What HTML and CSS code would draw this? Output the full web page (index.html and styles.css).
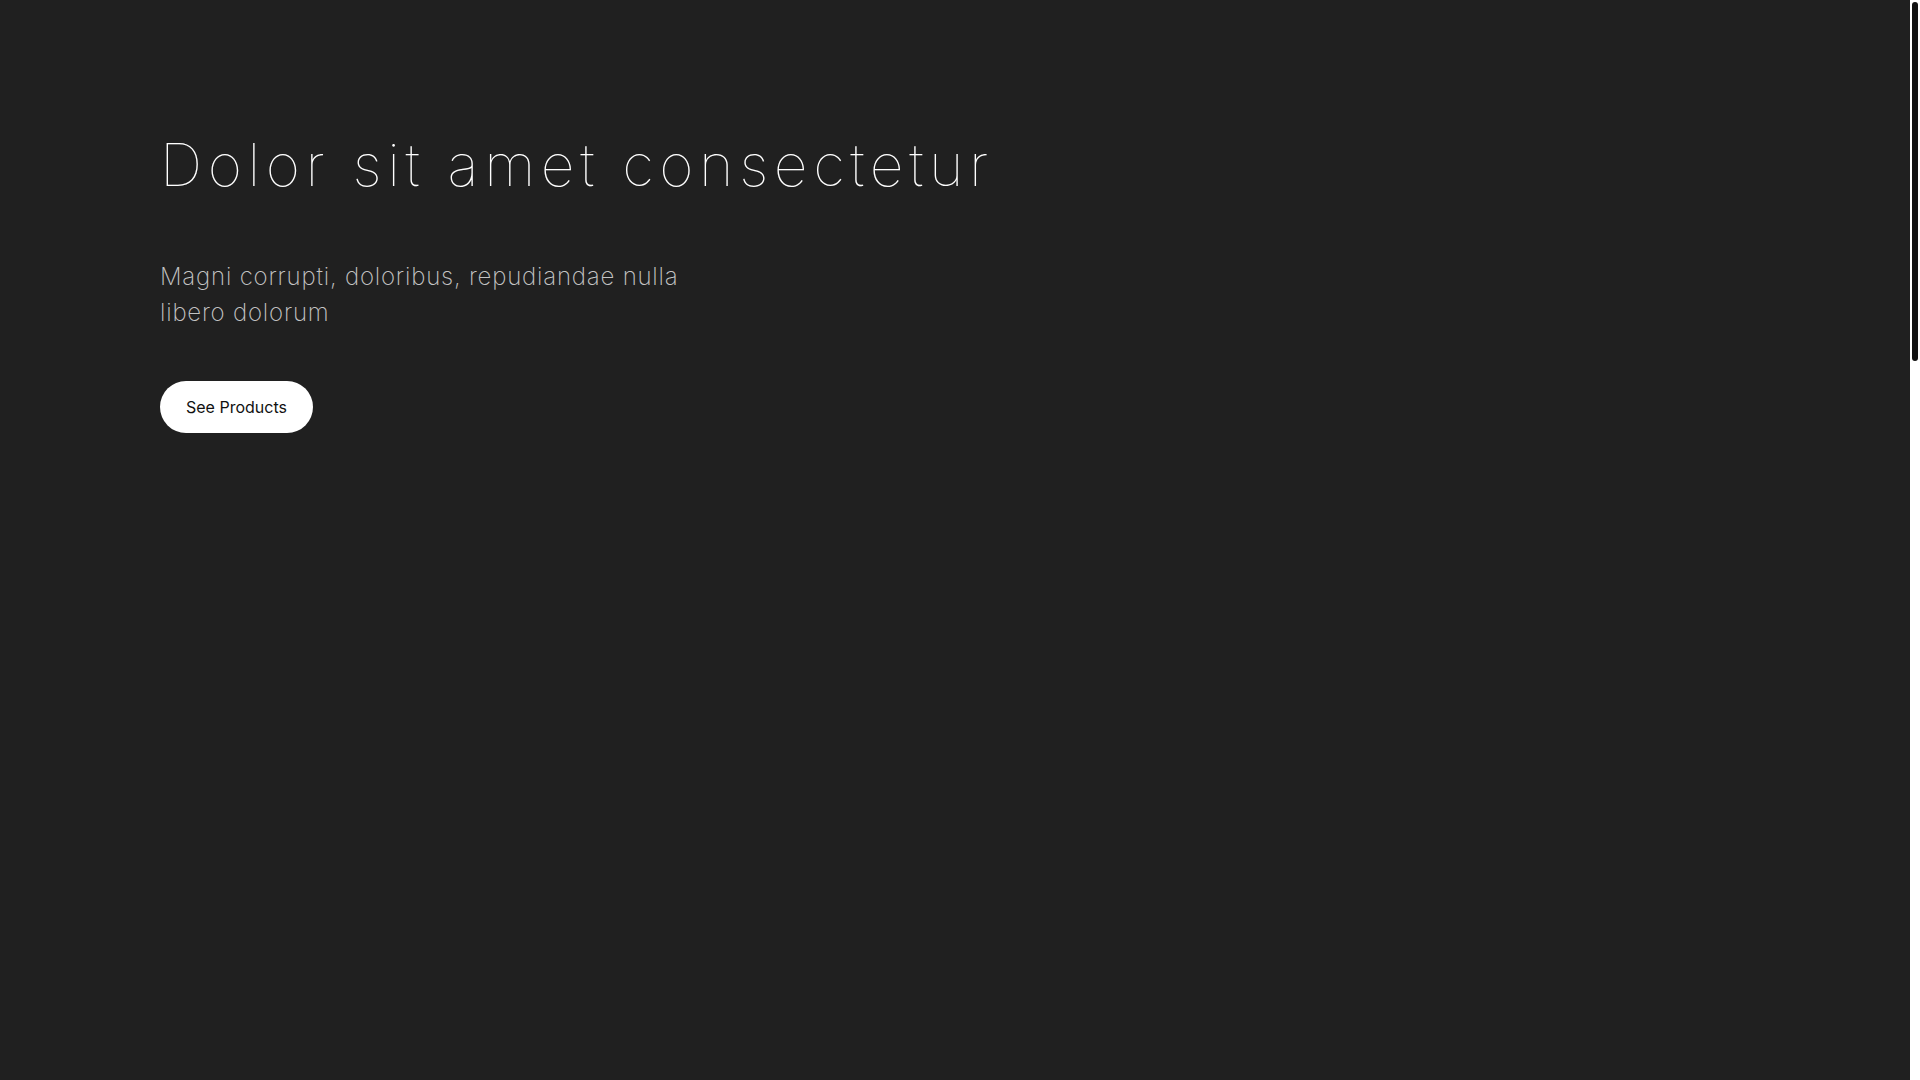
FILE: index.html
```html
<!DOCTYPE html>
<html lang="en">
<head>
<meta charset="utf-8">
<title>Hero</title>
<link rel="stylesheet" href="styles.css">
</head>
<body>
<main class="page">
  <section class="hero">
    <h1 class="hero-title">Dolor sit amet consectetur</h1>
    <p class="hero-text">Magni corrupti, doloribus, repudiandae nulla libero dolorum</p>
    <a class="hero-btn" href="#">See Products</a>
  </section>
</main>
<div class="scrollbar" aria-hidden="true"><div class="scrollbar-thumb"></div></div>
</body>
</html>
```
FILE: styles.css
```css
html { background: #202020; scrollbar-width: none; }
html::-webkit-scrollbar { display: none; }
body { margin: 0; background: #202020; font-family: Inter, "Noto Sans", sans-serif; }
.page { min-height: 3240px; margin-right: 10px; }
.hero { padding: 120px 160px 0; display: flex; flex-direction: column; align-items: flex-start; }
.hero-title { margin: 0; font-family: Inter, sans-serif; font-weight: 100; font-size: 59px; letter-spacing: 5.6px; line-height: 90px; color: #fff; }
.hero-text { margin: 49px 0 0; max-width: 560px; font-family: Inter, sans-serif; font-weight: 200; font-size: 24px; letter-spacing: 0.8px; line-height: 36px; color: #c4c4c4; }
.hero-btn { margin-top: 50px; display: inline-flex; align-items: center; height: 52px; padding: 0 26px; border-radius: 26px; background: #fff; color: #111; font-size: 16px; font-weight: 400; text-decoration: none; }
.scrollbar { position: fixed; top: 0; right: 0; width: 10px; height: 100vh; background: #fff; }
.scrollbar-thumb { margin: 2px 2px 0; height: 359px; border-radius: 3px; background: #111; }
```
